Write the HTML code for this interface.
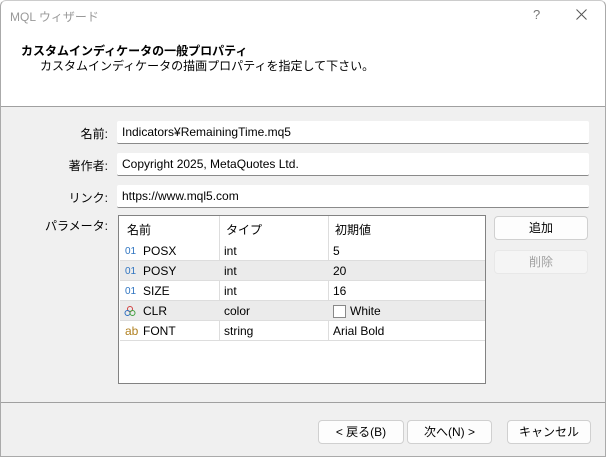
<!DOCTYPE html><html><head><meta charset="utf-8"><style>
*{margin:0;padding:0;box-sizing:border-box}
body{width:606px;height:457px;background:#f0f0f0;font-family:"Liberation Sans","Noto Sans CJK JP",sans-serif;font-size:12px;color:#000;position:relative;overflow:hidden}
.a{position:absolute}
.hdr{left:0;top:0;width:606px;height:107px;background:#fff;border-bottom:1px solid #a0a0a0}
.lbl{right:498px;text-align:right;white-space:nowrap}
.inp{left:117px;width:472px;height:23px;background:#fff;border-bottom:1px solid #8a8a8a;padding:4px 5px;border-radius:2px}
.btn{height:24px;background:#fdfdfd;border:1px solid #d0d0d0;border-radius:4px;text-align:center;line-height:22px}
.tbl{left:118px;top:215px;width:368px;height:169px;background:#fff;border:1px solid #828282}
.row{position:absolute;left:1px;width:365px;height:20px;border-bottom:1px solid #ddd}
.row span{position:absolute;top:3px}
.vl{position:absolute;top:0;width:1px;background:#ddd}
.row span.ic{font-size:10px;color:#2f74c0;top:5px;left:5px}
</style></head><body>
<div class="a hdr"></div>
<div class="a" style="left:10px;top:8px;color:#999;font-size:12px">MQL ウィザード</div>
<div class="a" style="left:533px;top:7px;color:#777;font-size:13px">?</div>
<svg class="a" style="left:576px;top:9px" width="11" height="11"><path d="M0.5 0.5L10.5 10.5M10.5 0.5L0.5 10.5" stroke="#555" stroke-width="1"/></svg>
<div class="a" style="left:21px;top:42px;font-weight:bold">カスタムインディケータの一般プロパティ</div>
<div class="a" style="left:40px;top:57px">カスタムインディケータの描画プロパティを指定して下さい。</div>
<div class="a lbl" style="top:125px">名前:</div>
<div class="a lbl" style="top:157px">著作者:</div>
<div class="a lbl" style="top:189px">リンク:</div>
<div class="a lbl" style="top:217px">パラメータ:</div>
<div class="a inp" style="top:121px">Indicators¥RemainingTime.mq5</div>
<div class="a inp" style="top:153px">Copyright 2025, MetaQuotes Ltd.</div>
<div class="a inp" style="top:185px">https://www.mql5.com</div>
<div class="a tbl">
<div class="row" style="top:0;height:25px;border-bottom:none"><span style="left:7px;top:5px">名前</span><span style="left:106px;top:5px">タイプ</span><span style="left:215px;top:5px">初期値</span></div>
<div class="vl" style="left:100px;height:125px"></div><div class="vl" style="left:209px;height:125px"></div>
<div class="row" style="top:25px"><span class="ic">01</span><span style="left:23px">POSX</span><span style="left:104px">int</span><span style="left:213px">5</span></div>
<div class="row" style="top:45px;background:#ebebeb"><span class="ic">01</span><span style="left:23px">POSY</span><span style="left:104px">int</span><span style="left:213px">20</span></div>
<div class="row" style="top:65px"><span class="ic">01</span><span style="left:23px">SIZE</span><span style="left:104px">int</span><span style="left:213px">16</span></div>
<div class="row" style="top:85px;background:#ebebeb"><svg style="position:absolute;left:4px;top:4px" width="12" height="12"><circle cx="6" cy="4" r="2.5" fill="none" stroke="#d04040"/><circle cx="3.5" cy="8" r="2.5" fill="none" stroke="#3070c0"/><circle cx="8.5" cy="8" r="2.5" fill="none" stroke="#40a040"/></svg><span style="left:23px">CLR</span><span style="left:104px">color</span><span style="left:213px;top:4px;width:13px;height:13px;border:1px solid #888;background:#fff"></span><span style="left:230px">White</span></div>
<div class="row" style="top:105px"><span style="left:5px;color:#b08020">ab</span><span style="left:23px">FONT</span><span style="left:104px">string</span><span style="left:213px">Arial Bold</span></div>
</div>
<div class="a btn" style="left:494px;top:216px;width:94px">追加</div>
<div class="a btn" style="left:494px;top:250px;width:94px;color:#a0a0a0;background:#f5f5f5;border-color:#e8e8e8">削除</div>
<div class="a" style="left:0;top:402px;width:606px;height:1px;background:#a0a0a0"></div>
<div class="a btn" style="left:318px;top:420px;width:86px">&lt; 戻る(B)</div>
<div class="a btn" style="left:407px;top:420px;width:85px">次へ(N) &gt;</div>
<div class="a btn" style="left:507px;top:420px;width:84px">キャンセル</div>
<div class="a" style="left:0;top:0;width:606px;height:457px;border:1px solid #aaa;border-top-color:#ccc;border-radius:6px 6px 0 0;pointer-events:none"></div>
</body></html>
